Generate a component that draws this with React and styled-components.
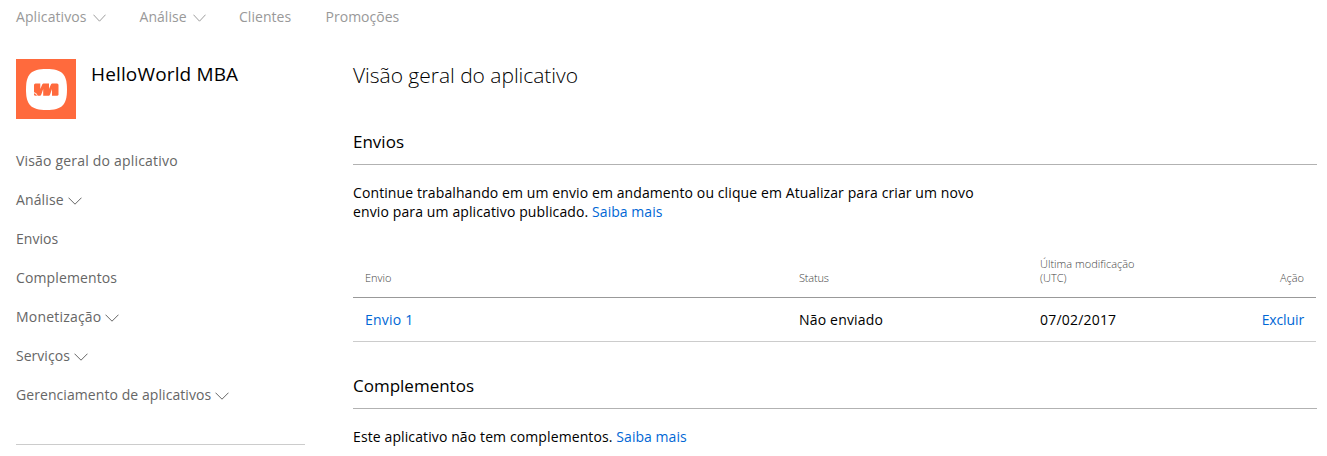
import React from "react";
import styled, { createGlobalStyle } from "styled-components";

const GlobalStyle = createGlobalStyle`
  * { box-sizing: border-box; }
  body { margin: 0; background: #fff; color: #000; font-family: "Open Sans", "Noto Sans", sans-serif; font-size: 14px; }
  h1, h2, p { margin: 0; font-weight: 400; }
`;

const Page = styled.div`
  height: 456px;
  overflow: hidden;
`;

const TopNav = styled.nav`
  display: flex;
  height: 34px;
  padding-left: 16px;
`;

const TopLink = styled.a`
  display: flex;
  align-items: center;
  gap: 6px;
  width: ${(p) => p.$width}px;
  color: #999;
  line-height: 34px;
  letter-spacing: ${(p) => p.$track || 0}px;
  white-space: nowrap;
`;

const Columns = styled.div`
  display: flex;
`;

const Sidebar = styled.aside`
  width: 289px;
  margin-left: 16px;
  padding-top: 25px;
`;

const AppHeader = styled.div`
  display: flex;
  gap: 15px;
  height: 60px;
`;

const AppName = styled.h2`
  font-size: 19px;
  line-height: 30px;
  letter-spacing: ${(p) => p.$track || 0}px;
  white-space: nowrap;
`;

const SideList = styled.div`
  margin-top: 22px;
  padding-bottom: 30px;
  border-bottom: 1px solid #ccc;
`;

const SideLink = styled.a`
  display: flex;
  align-items: center;
  gap: 4px;
  height: 39px;
  color: #666;
  line-height: 39px;
  letter-spacing: ${(p) => p.$track || 0}px;
  white-space: nowrap;
`;

const Main = styled.main`
  width: 964px;
  margin-left: 48px;
`;

const PageTitle = styled.h1`
  margin: 25px 0 1px;
  font-size: 21px;
  font-weight: 300;
  line-height: 32px;
  letter-spacing: ${(p) => p.$track || 0}px;
`;

const SectionTitle = styled.h2`
  height: ${(p) => p.$height}px;
  padding-top: ${(p) => p.$height - 36}px;
  border-bottom: 1px solid #b2b2b2;
  font-size: 17px;
  line-height: 26px;
  letter-spacing: ${(p) => p.$track || 0}px;
`;

const Paragraph = styled.p`
  padding-top: 18px;
  line-height: 19px;
  white-space: nowrap;
`;

const Line = styled.span`
  display: block;
  letter-spacing: ${(p) => p.$track || 0}px;
`;

const Link = styled.a`
  color: #0067d5;
  letter-spacing: ${(p) => p.$track || 0}px;
`;

const Table = styled.div`
  width: 963px;
  margin-top: 35px;
`;

const Row = styled.div`
  display: grid;
  grid-template-columns: 434px 241px 1fr auto;
  padding: 0 12px;
  line-height: 19px;
`;

const HeadRow = styled(Row)`
  height: 42px;
  padding-bottom: 12px;
  align-items: end;
  border-bottom: 1px solid #999;
  color: #444;
  font-size: 11px;
  font-weight: 300;
  line-height: 14px;
`;

const BodyRow = styled(Row)`
  height: 44px;
  align-items: center;
  border-bottom: 1px solid #ccc;
`;

const Cell = styled.div`
  letter-spacing: ${(p) => p.$track || 0}px;
`;

const ChevronSvg = styled.svg`
  flex: none;
  margin-top: 2px;
`;

const Chevron = ({ size = 13 }) => (
  <ChevronSvg width={size} height="8" viewBox="0 0 14 8" preserveAspectRatio="none" fill="none" stroke="currentColor">
    <path d="M0.5 0.7L7 7.2L13.5 0.7" />
  </ChevronSvg>
);

const Logo = () => (
  <svg width="60" height="60" viewBox="0 0 60 60">
    <rect width="60" height="60" fill="#ff6a3d" />
    <path d="M30.500 10C46 10 51 15 51 30.500C51 46 46 51 30.500 51C15 51 10 46 10 30.500C10 15 15 10 30.500 10Z" fill="#fff" />
    <rect x="18" y="24.500" width="24.500" height="12.300" rx="1.500" fill="#ff6a3d" />
    <g fill="#fff">
      <path d="M24.300 24H27.300L26.200 25.500L24.300 30Z" />
      <path d="M33 24H36L34.900 25.500L33 30Z" />
      <path d="M27.200 30V37.200H24.200L25.300 35.500Z" />
      <path d="M36 30V37.200H33L34.100 35.500Z" />
      <path d="M18 33L20.600 34.600L22 37.200H21.200L20 35.600L18 34.200Z" opacity="0.800" />
    </g>
  </svg>
);

const topLinks = [
  { label: "Aplicativos", width: 123.5, track: 0.09, menu: true },
  { label: "Análise", width: 99.5, track: 0.04, menu: true },
  { label: "Clientes", width: 86.5, track: 0.05 },
  { label: "Promoções", width: 90, track: 0.02 },
];

const sideLinks = [
  { label: "Visão geral do aplicativo", track: 0.19 },
  { label: "Análise", track: 0.12, menu: true },
  { label: "Envios", track: 0.04 },
  { label: "Complementos", track: 0.12 },
  { label: "Monetização", track: 0.2, menu: true },
  { label: "Serviços", track: 0.03, menu: true },
  { label: "Gerenciamento de aplicativos", track: 0.07, menu: true },
];

export default function App() {
  return (
    <Page>
      <GlobalStyle />
      <TopNav>
        {topLinks.map((l) => (
          <TopLink key={l.label} $width={l.width} $track={l.track}>
            <span>{l.label}</span>
            {l.menu && <Chevron />}
          </TopLink>
        ))}
      </TopNav>
      <Columns>
        <Sidebar>
          <AppHeader>
            <Logo />
            <AppName $track={0.15}>HelloWorld MBA</AppName>
          </AppHeader>
          <SideList>
            {sideLinks.map((l) => (
              <SideLink key={l.label} $track={l.track}>
                <span>{l.label}</span>
                {l.menu && <Chevron size={14} />}
              </SideLink>
            ))}
          </SideList>
        </Sidebar>
        <Main>
          <PageTitle $track={-0.03}>Visão geral do aplicativo</PageTitle>
          <SectionTitle $height={73}>Envios</SectionTitle>
          <Paragraph>
            <Line $track={0.1}>Continue trabalhando em um envio em andamento ou clique em Atualizar para criar um novo</Line>
            <Line $track={0.12}>envio para um aplicativo publicado. <Link $track={0.05}>Saiba mais</Link></Line>
          </Paragraph>
          <Table>
            <HeadRow>
              <Cell>Envio</Cell>
              <Cell $track={-0.2}>Status</Cell>
              <Cell>Última modificação<br />(UTC)</Cell>
              <Cell>Ação</Cell>
            </HeadRow>
            <BodyRow>
              <Cell><Link $track={0.2}>Envio 1</Link></Cell>
              <Cell $track={0.18}>Não enviado</Cell>
              <Cell $track={0.2}>07/02/2017</Cell>
              <Cell><Link $track={-0.12}>Excluir</Link></Cell>
            </BodyRow>
          </Table>
          <SectionTitle $height={67}>Complementos</SectionTitle>
          <Paragraph>
            <Line $track={0.11}>Este aplicativo não tem complementos. <Link $track={0.05}>Saiba mais</Link></Line>
          </Paragraph>
        </Main>
      </Columns>
    </Page>
  );
}
